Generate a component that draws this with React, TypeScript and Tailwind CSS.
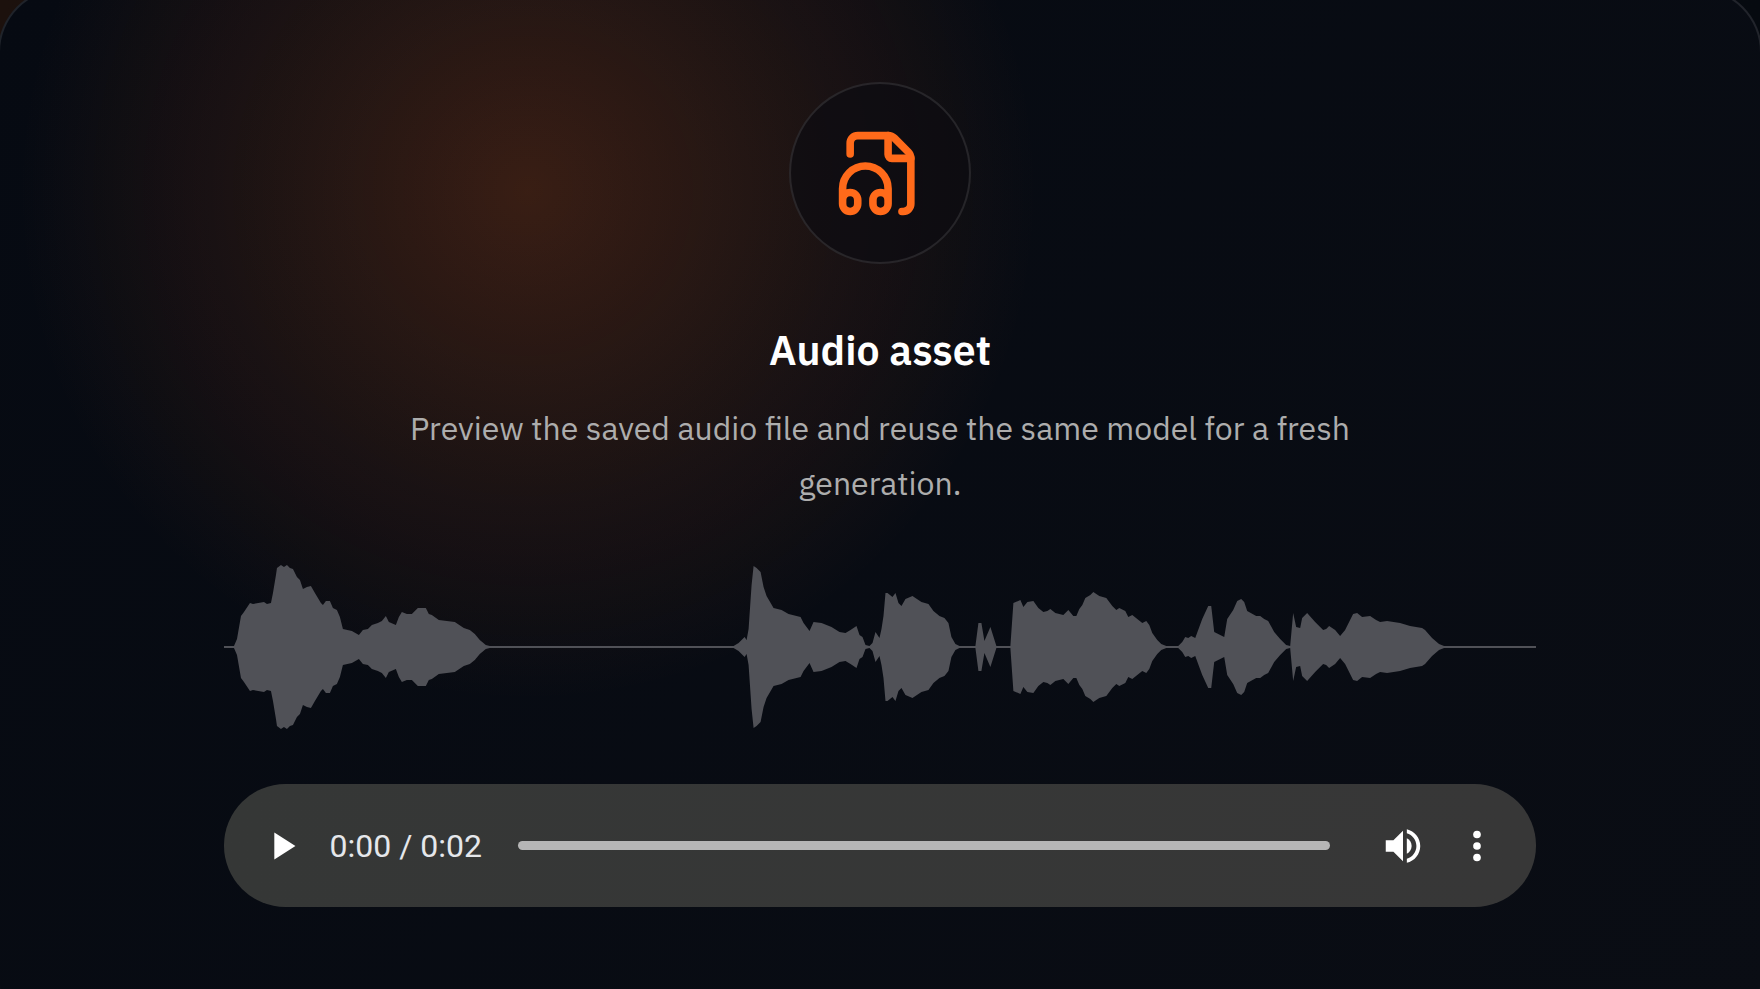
import { useState } from 'react';
import { FileHeadphone } from 'lucide-react';

// [x, amplitude] pairs, mirrored around the middle line
const PEAKS = [
    [0, 1], [10, 1], [13, 8], [17, 31], [20, 35], [26, 44], [29, 43], [40, 45], [43, 43], [47, 44], [49, 54], [52, 72], [53, 79],
    [57, 82], [60, 80], [63, 82], [66, 79], [69, 78], [73, 70], [76, 67], [79, 58], [83, 60], [87, 61], [91, 54], [97, 44], [99, 42],
    [102, 46], [106, 46], [109, 39], [113, 37], [116, 30], [119, 18], [128, 16], [135, 12], [139, 17], [144, 18], [148, 22], [154, 24],
    [158, 26], [162, 31], [165, 25], [172, 22], [175, 30], [178, 35], [183, 33], [188, 33], [194, 39], [202, 39], [205, 33], [208, 32],
    [215, 27], [231, 25], [240, 19], [246, 17], [251, 13], [256, 7], [262, 2], [266, 1], [510, 1], [515, 4], [521, 10], [523, 7],
    [525, 18], [528, 62], [530, 81], [533, 79], [537, 75], [540, 60], [543, 51], [550, 39], [558, 37], [565, 33], [577, 30], [580, 24],
    [586, 16], [590, 25], [598, 24], [608, 20], [616, 15], [622, 14], [627, 17], [633, 21], [636, 12], [639, 10], [642, 2], [646, 1],
    [649, 4], [652, 15], [656, 9], [658, 18], [660, 31], [662, 54], [664, 54], [669, 50], [672, 54], [675, 44], [678, 41], [682, 48],
    [689, 51], [698, 45], [705, 43], [710, 36], [716, 31], [721, 29], [725, 24], [728, 10], [732, 3], [736, 1], [752, 1], [755, 24],
    [758, 24], [761, 6], [767, 20], [773, 1], [787, 1], [790, 44], [797, 47], [800, 40], [804, 45], [810, 46], [815, 39], [820, 35],
    [824, 36], [827, 38], [832, 34], [840, 32], [845, 37], [850, 31], [853, 31], [856, 38], [859, 42], [862, 49], [867, 52], [870, 55],
    [876, 51], [883, 49], [889, 41], [893, 37], [896, 39], [902, 36], [905, 30], [909, 32], [919, 24], [923, 26], [926, 22], [929, 14],
    [934, 7], [938, 3], [943, 1], [955, 1], [959, 5], [962, 10], [965, 9], [968, 11], [972, 9], [979, 28], [985, 41], [988, 41],
    [991, 15], [1001, 10], [1004, 28], [1010, 37], [1014, 46], [1018, 48], [1021, 45], [1024, 36], [1033, 31], [1037, 31], [1041, 28],
    [1045, 26], [1051, 15], [1057, 8], [1063, 2], [1067, 1], [1068, 12], [1070, 34], [1073, 20], [1077, 19], [1079, 29], [1084, 34],
    [1092, 25], [1100, 17], [1103, 18], [1106, 21], [1112, 17], [1117, 11], [1122, 17], [1130, 33], [1134, 34], [1139, 30], [1147, 31],
    [1153, 27], [1157, 25], [1164, 26], [1177, 24], [1187, 21], [1199, 19], [1202, 17], [1209, 9], [1216, 3], [1221, 1], [1314, 1],
];

const upper = PEAKS.map(([x, a]) => `${x},${82 - a}`);
const lower = PEAKS.map(([x, a]) => `${x},${82 + a}`).reverse();
const WAVE_POINTS = [...upper, ...lower].join(' ');

function Waveform() {
    return (
        <svg className="mt-[54px] block h-[164px] w-full fill-[#505157]" viewBox="0 0 1314 164" preserveAspectRatio="none" aria-hidden="true">
            <polygon points={WAVE_POINTS} />
        </svg>
    );
}

function Player() {
    const [playing, setPlaying] = useState(false);
    const [position, setPosition] = useState(0);

    return (
        <div className="mt-[55px] flex h-[123px] w-full items-center rounded-full bg-linear-to-r from-[#353736] to-[#373737] pr-9 pl-[30px]">
            <button
                type="button"
                aria-label={playing ? 'Pause' : 'Play'}
                className="flex size-14 shrink-0 items-center justify-center"
                onClick={() => setPlaying(!playing)}
            >
                <svg className="size-[46px] fill-white" viewBox="0 0 24 24">
                    {playing ? <path d="M6 19h4V5H6v14zm8-14v14h4V5h-4z" /> : <path d="M8 5v14l11-7z" />}
                </svg>
            </button>
            <span className="ml-5 shrink-0 font-[Roboto] text-[32px] text-gray-200">0:00 / 0:02</span>
            <input
                type="range"
                aria-label="Seek"
                min={0}
                max={2}
                step={1}
                value={position}
                onChange={(e) => setPosition(Number(e.target.value))}
                className="ml-9 h-[9px] min-w-0 flex-1 appearance-none rounded-full bg-[#b6b6b6] [&::-webkit-slider-thumb]:size-0 [&::-webkit-slider-thumb]:appearance-none"
            />
            <button type="button" aria-label="Mute" className="ml-[50px] flex size-[46px] shrink-0 items-center justify-center">
                <svg className="size-[46px] fill-white" viewBox="0 0 24 24">
                    <path d="M3 9v6h4l5 5V4L7 9H3zm11-5.77v2.06c2.89.86 5 3.54 5 6.71s-2.11 5.85-5 6.71v2.06c4.01-.91 7-4.49 7-8.77s-2.99-7.86-7-8.77z" />
                    <path d="M16.5 12c0-1.77-1.02-3.29-2.5-4.03v8.05c1.48-.73 2.5-2.25 2.5-4.02z" />
                </svg>
            </button>
            <button type="button" aria-label="More options" className="ml-7 flex size-[46px] shrink-0 items-center justify-center">
                <svg className="size-[46px] fill-white" viewBox="0 0 24 24">
                    <circle cx="12" cy="6" r="2" />
                    <circle cx="12" cy="12" r="2" />
                    <circle cx="12" cy="18" r="2" />
                </svg>
            </button>
        </div>
    );
}

export default function App() {
    return (
        <div className="h-screen overflow-hidden bg-linear-to-r from-[#1c110d] to-[#060a10]">
            <main className="-mx-0.5 -mt-3 flex min-h-[calc(100%+72px)] flex-col items-center rounded-[64px] border-2 border-white/10 bg-[radial-gradient(circle_at_30%_19%,rgba(255,106,26,0.2),transparent_34%),linear-gradient(135deg,#060a12,#0a0d14)] px-[12.7%] pt-[92px] text-center font-['IBM_Plex_Sans',Roboto,sans-serif]">
                <div className="flex size-[182px] items-center justify-center rounded-full border-2 border-white/10 bg-[#0d0c12]/75">
                    <FileHeadphone className="size-[91px] text-[#ff6a1a]" />
                </div>
                <h1 className="mt-[63px] text-[41px] leading-[46px] font-semibold text-white">Audio asset</h1>
                <p className="mt-7 max-w-[1000px] text-[32px] leading-[55px] text-[#adadad]">
                    Preview the saved audio file and reuse the same model for a fresh generation.
                </p>
                <Waveform />
                <Player />
            </main>
        </div>
    );
}
